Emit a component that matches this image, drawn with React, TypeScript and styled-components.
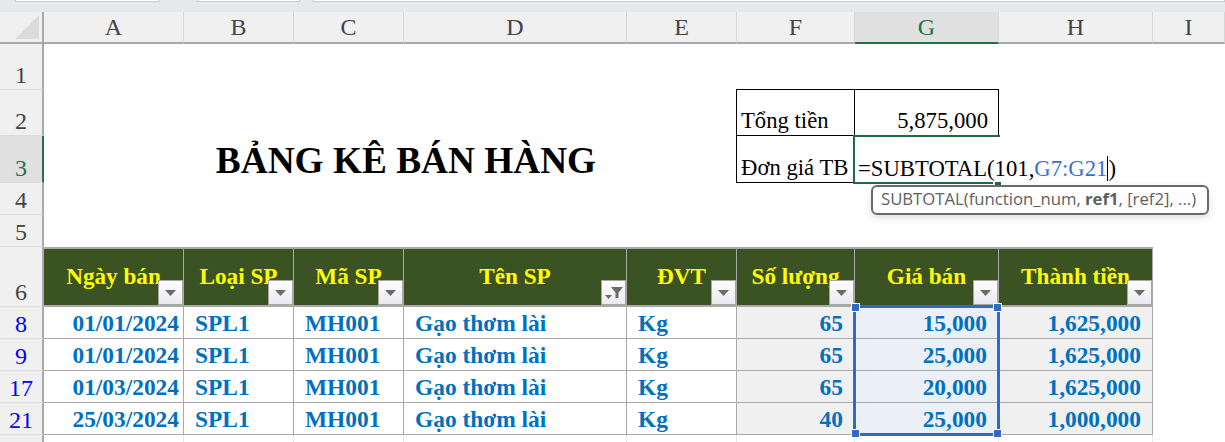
import React from "react";
import styled, { createGlobalStyle } from "styled-components";

const GlobalStyle = createGlobalStyle`
  html, body {
    margin: 0;
    padding: 0;
    background: #fff;
    overflow: hidden;
  }
`;

const serif = `"Liberation Serif", "Times New Roman", serif`;

const Page = styled.div`
  width: 1225px;
  height: 442px;
  overflow: hidden;
  display: flex;
  flex-direction: column;
  font-family: ${serif};
`;

const TabStrip = styled.div`
  height: 12px;
  flex: none;
  background: #e6e8ed;
  display: flex;
  padding-left: 15px;
`;

const TabStub = styled.div<{ $w: number; $gap?: number }>`
  width: ${(p) => p.$w}px;
  height: 1px;
  margin-left: ${(p) => p.$gap ?? 0}px;
  background: #fff;
  border: 1px solid #c9cbd0;
  border-top: none;
`;

const Sheet = styled.div`
  position: relative;
  display: grid;
  grid-template-columns: 44px 140px 110px 110px 223px 110px 118px 144px 154px 72px;
  grid-template-rows: 32px 46px 46px 47px 32px 32px 60px 32px 32px 32px 32px 32px;
`;

const Corner = styled.div`
  background: #f0f0f0;
  border-right: 2px solid #a9a9a9;
  border-bottom: 2px solid #a9a9a9;
  box-sizing: border-box;
  display: flex;
  align-items: flex-end;
  justify-content: flex-end;
  padding: 0 3px 3px 0;
`;

const ColHead = styled.div<{ $active?: boolean }>`
  box-sizing: border-box;
  background: ${(p) => (p.$active ? "#e0e0e0" : "#f0f0f0")};
  color: ${(p) => (p.$active ? "#217346" : "#444")};
  border-right: 1px solid #d6d6d6;
  border-bottom: 2px solid ${(p) => (p.$active ? "#217346" : "#a9a9a9")};
  font-size: 24px;
  display: flex;
  align-items: center;
  justify-content: center;
`;

const RowHead = styled.div<{ $active?: boolean; $filtered?: boolean }>`
  box-sizing: border-box;
  background: ${(p) => (p.$active ? "#e0e0e0" : "#f0f0f0")};
  color: ${(p) => (p.$filtered ? "#0000ff" : p.$active ? "#217346" : "#444")};
  border-right: 2px solid ${(p) => (p.$active ? "#217346" : "#a9a9a9")};
  border-bottom: 1px solid #dcdcdc;
  font-size: 24px;
  line-height: 1;
  display: flex;
  align-items: flex-end;
  justify-content: center;
  padding-bottom: 2px;
`;

const Blank = styled.div<{ $span?: number }>`
  grid-column: span ${(p) => p.$span ?? 1};
  background: #fff;
`;

const Title = styled.div`
  grid-column: span 5;
  box-sizing: border-box;
  padding: 1px 0 0 31px;
  display: flex;
  align-items: center;
  justify-content: center;
  font-size: 37.3px;
  font-weight: bold;
  color: #000;
  white-space: nowrap;
`;

const SummaryCell = styled.div<{ $left?: boolean; $bottom?: boolean; $alignRight?: boolean }>`
  box-sizing: border-box;
  margin-top: -1px;
  margin-left: ${(p) => (p.$left ? "-1px" : "0")};
  border-top: 1px solid #000;
  border-left: ${(p) => (p.$left ? "1px solid #000" : "none")};
  border-right: 1px solid #000;
  border-bottom: ${(p) => (p.$bottom ? "1px solid #000" : "none")};
  font-size: 22.7px;
  line-height: 1;
  color: #000;
  display: flex;
  align-items: flex-end;
  justify-content: ${(p) => (p.$alignRight ? "flex-end" : "flex-start")};
  padding: 0 10px ${(p) => (p.$bottom ? "2px" : "3px")} 4px;
  white-space: nowrap;
`;

const EditingCell = styled.div`
  position: relative;
  font-size: 22.7px;
  line-height: 1;
  color: #000;
  display: flex;
  align-items: flex-end;
  padding: 0 0 2px 3px;
  white-space: nowrap;
`;

const EditFrame = styled.div`
  position: absolute;
  left: -2px;
  top: -1px;
  width: 140px;
  height: 49px;
  box-sizing: border-box;
  border: 2px solid #1f6b45;
  border-right: none;
  &::before {
    content: "";
    position: absolute;
    top: -2px;
    left: 138px;
    width: 7px;
    height: 2px;
    background: #1f6b45;
  }
  &::after {
    content: "";
    position: absolute;
    bottom: -3px;
    left: 140px;
    width: 6px;
    height: 3px;
    background: #1f6b45;
  }
`;

const FormulaText = styled.span`
  flex: none;
`;

const RefText = styled.span`
  color: #3a6fd0;
`;

const Caret = styled.span`
  display: inline-block;
  width: 1px;
  height: 25px;
  vertical-align: -5px;
  background: #000;
`;

const HeadCell = styled.div`
  position: relative;
  box-sizing: border-box;
  background: #3b5323;
  border-top: 2px solid #a9a9a9;
  border-right: 1px solid #a9a9a9;
  border-bottom: 2px solid #a9a9a9;
  color: #ffff00;
  font-size: 23.2px;
  font-weight: bold;
  display: flex;
  align-items: center;
  justify-content: center;
  padding-bottom: 1px;
  white-space: nowrap;
`;

const FilterButton = styled.div`
  position: absolute;
  right: 0;
  bottom: 0;
  width: 25px;
  height: 25px;
  box-sizing: border-box;
  border: 1px solid #a6a6a6;
  background: linear-gradient(#fff, #e9e9f0);
  display: flex;
  align-items: center;
  justify-content: center;
`;

const DataCell = styled.div<{ $align?: "left" | "right"; $shaded?: boolean; $picked?: boolean }>`
  box-sizing: border-box;
  background: ${(p) => (p.$picked ? "#eaeff8" : p.$shaded ? "#f0f0f0" : "#fff")};
  border-right: 1px solid #a9a9a9;
  border-bottom: 1px solid #a9a9a9;
  color: #0070c0;
  font-size: 23.4px;
  font-weight: bold;
  line-height: 1;
  display: flex;
  align-items: center;
  justify-content: ${(p) => (p.$align === "right" ? "flex-end" : "flex-start")};
  padding: ${(p) => (p.$align === "right" ? "3px 4px 0 0" : "3px 0 0 11px")};
  white-space: nowrap;
`;

const NumberCell = styled(DataCell)`
  padding-right: 11px;
`;

const EmptyCell = styled.div`
  border-right: 1px solid #e6e6e6;
`;

const Selection = styled.div`
  position: absolute;
  left: 853px;
  top: 293px;
  width: 147px;
  height: 131px;
  box-sizing: border-box;
  border: 3px solid #2f6bc4;
  pointer-events: none;
`;

const Handle = styled.div<{ $x: "left" | "right"; $y: "top" | "bottom" }>`
  position: absolute;
  ${(p) => p.$x}: -5px;
  ${(p) => p.$y}: -5px;
  width: 7px;
  height: 7px;
  background: #2f6bc4;
  border: 1px solid #fff;
`;

const Tooltip = styled.div`
  position: absolute;
  left: 871px;
  top: 173px;
  width: 338px;
  height: 30px;
  box-sizing: border-box;
  background: #fff;
  border: 2px solid #6a6a6a;
  border-radius: 6px;
  box-shadow: 0 3px 8px rgba(0, 0, 0, 0.12);
  color: #606060;
  font-family: "Open Sans", "Noto Sans", sans-serif;
  font-size: 16.7px;
  line-height: 24px;
  padding-left: 8px;
  white-space: nowrap;
`;

const ArrowIcon = () => (
  <svg width="11" height="6" viewBox="0 0 11 6">
    <path d="M0 0h11L5.5 6z" fill="#6b6b6b" />
  </svg>
);

const FunnelIcon = () => (
  <svg width="18" height="12" viewBox="0 0 18 12">
    <path d="M6 0h12l-4.5 5.5V11h-3V5.5z" fill="#6b6b6b" />
    <path d="M0 8h7L3.5 12z" fill="#6b6b6b" />
  </svg>
);

const columns = ["A", "B", "C", "D", "E", "F", "G", "H", "I"];

const headers = ["Ngày bán", "Loại SP", "Mã SP", "Tên SP", "ĐVT", "Số lượng", "Giá bán", "Thành tiền"];

const rows = [
  { num: 8, date: "01/01/2024", qty: "65", price: "15,000", total: "1,625,000" },
  { num: 9, date: "01/01/2024", qty: "65", price: "25,000", total: "1,625,000" },
  { num: 17, date: "01/03/2024", qty: "65", price: "20,000", total: "1,625,000" },
  { num: 21, date: "25/03/2024", qty: "40", price: "25,000", total: "1,000,000" },
];

export default function App() {
  return (
    <Page>
      <GlobalStyle />
      <TabStrip>
        <TabStub $w={143} />
        <TabStub $w={101} $gap={37} />
        <TabStub $w={911} $gap={12} />
      </TabStrip>
      <Sheet>
        <Corner>
          <svg width="24" height="24" viewBox="0 0 24 24">
            <path d="M24 0v24H0z" fill="#dcdcdc" />
          </svg>
        </Corner>
        {columns.map((c) => (
          <ColHead key={c} $active={c === "G"}>
            {c}
          </ColHead>
        ))}

        <RowHead>1</RowHead>
        <Blank $span={9} />

        <RowHead>2</RowHead>
        <Blank $span={5} />
        <SummaryCell $left>Tổng tiền</SummaryCell>
        <SummaryCell $alignRight>5,875,000</SummaryCell>
        <Blank $span={2} />

        <RowHead $active>3</RowHead>
        <Title>BẢNG KÊ BÁN HÀNG</Title>
        <SummaryCell $left $bottom>Đơn giá TB</SummaryCell>
        <EditingCell>
          <EditFrame />
          <FormulaText>
            =SUBTOTAL(101,<RefText>G7:G21</RefText>
            <Caret />)
          </FormulaText>
        </EditingCell>
        <Blank $span={2} />

        <RowHead>4</RowHead>
        <Blank $span={9} />

        <RowHead>5</RowHead>
        <Blank $span={9} />

        <RowHead>6</RowHead>
        {headers.map((h) => (
          <HeadCell key={h}>
            {h}
            <FilterButton>{h === "Tên SP" ? <FunnelIcon /> : <ArrowIcon />}</FilterButton>
          </HeadCell>
        ))}
        <Blank />

        {rows.map((r) => (
          <React.Fragment key={r.num}>
            <RowHead $filtered>{r.num}</RowHead>
            <DataCell $align="right">{r.date}</DataCell>
            <DataCell>SPL1</DataCell>
            <DataCell>MH001</DataCell>
            <DataCell>Gạo thơm lài</DataCell>
            <DataCell>Kg</DataCell>
            <NumberCell $align="right" $shaded>{r.qty}</NumberCell>
            <NumberCell $align="right" $picked>{r.price}</NumberCell>
            <NumberCell $align="right" $shaded>{r.total}</NumberCell>
            <Blank />
          </React.Fragment>
        ))}

        <RowHead />
        {headers.map((h) => (
          <EmptyCell key={h} />
        ))}
        <Blank />

        <Selection>
          <Handle $x="left" $y="top" />
          <Handle $x="right" $y="top" />
          <Handle $x="left" $y="bottom" />
          <Handle $x="right" $y="bottom" />
        </Selection>
        <Tooltip>
          SUBTOTAL(function_num, <b>ref1</b>, [ref2], ...)
        </Tooltip>
      </Sheet>
    </Page>
  );
}
